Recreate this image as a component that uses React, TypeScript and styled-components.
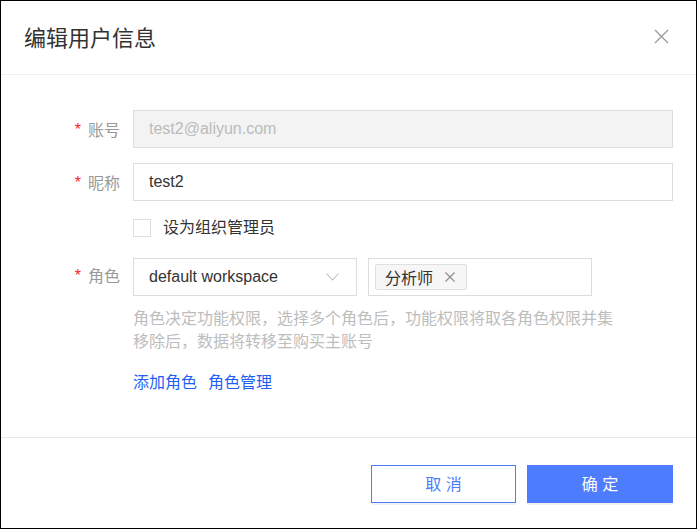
import * as React from "react";
import styled, { createGlobalStyle } from "styled-components";

const GlobalStyle = createGlobalStyle`
  html, body {
    margin: 0;
    padding: 0;
    background: #fff;
  }
  body {
    font-family: "Liberation Sans", "Noto Sans CJK SC", sans-serif;
  }
  * {
    box-sizing: border-box;
  }
`;

const Dialog = styled.div`
  width: 697px;
  height: 529px;
  border: 1px solid #000;
  background: #fff;
  display: flex;
  flex-direction: column;
`;

const Header = styled.div`
  height: 74px;
  flex-shrink: 0;
  display: flex;
  align-items: center;
  justify-content: space-between;
  padding: 0 27px 3px 23px;
  border-bottom: 1px solid #eeeeee;
`;

const Title = styled.div`
  font-size: 22px;
  color: #333;
  letter-spacing: 0;
`;

const CloseButton = styled.button`
  border: none;
  background: none;
  padding: 0;
  width: 15px;
  height: 15px;
  display: flex;
  cursor: pointer;
`;

const Body = styled.div`
  flex: 1;
  padding: 35px 23px 0 0;
  display: flex;
  flex-direction: column;
`;

const FormRow = styled.div<{ $top?: number }>`
  display: grid;
  grid-template-columns: 119px 1fr;
  column-gap: 13px;
  align-items: center;
  margin-top: ${(p) => p.$top ?? 0}px;
`;

const Label = styled.label<{ $alignTop?: boolean }>`
  display: flex;
  justify-content: flex-end;
  align-items: center;
  font-size: 16px;
  color: #999;
  white-space: nowrap;
  align-self: ${(p) => (p.$alignTop ? "start" : "auto")};
  margin-top: ${(p) => (p.$alignTop ? 5 : 0)}px;
`;

const Required = styled.span`
  color: #f5222d;
  font-size: 16px;
  margin-right: 7px;
  position: relative;
  top: 1px;
`;

const TextInput = styled.input<{ disabled?: boolean }>`
  width: 100%;
  height: 38px;
  border: 1px solid #dddddd;
  background: ${(p) => (p.disabled ? "#f3f3f3" : "#fff")};
  color: ${(p) => (p.disabled ? "#bbbbbb" : "#333")};
  font-size: 16px;
  font-family: inherit;
  padding: 0 15px;
  outline: none;
`;

const CheckLine = styled.label`
  display: flex;
  align-items: center;
  gap: 12px;
  height: 18px;
  line-height: 18px;
  font-size: 16px;
  color: #333;
`;

const CheckBox = styled.span`
  width: 18px;
  height: 18px;
  border: 1px solid #dddddd;
  background: #fff;
  display: inline-block;
`;

const RoleLine = styled.div`
  display: flex;
  gap: 11px;
`;

const Select = styled.div`
  width: 224px;
  height: 38px;
  border: 1px solid #dddddd;
  display: flex;
  align-items: center;
  justify-content: space-between;
  padding: 0 17px 0 15px;
  font-size: 16px;
  color: #333;
`;

const TagBox = styled.div`
  width: 224px;
  height: 38px;
  border: 1px solid #dddddd;
  display: flex;
  align-items: center;
  padding: 0 6px;
`;

const Tag = styled.span`
  height: 26px;
  display: inline-flex;
  align-items: center;
  gap: 12px;
  padding: 0 11px 0 9px;
  background: #f6f6f6;
  border: 1px solid #e0e0e0;
  border-radius: 2px;
  font-size: 16px;
  color: #333;
`;

const Help = styled.div`
  margin-top: 11px;
  font-size: 16px;
  line-height: 23px;
  color: #bdbdbd;
`;

const Links = styled.div`
  margin-top: 18px;
  display: flex;
  gap: 11px;
  font-size: 16px;
  line-height: 23px;
`;

const Link = styled.a`
  color: #1f5ff5;
  text-decoration: none;
  cursor: pointer;
`;

const Footer = styled.div`
  height: 91px;
  flex-shrink: 0;
  border-top: 1px solid #e8e8e8;
  display: flex;
  justify-content: flex-end;
  align-items: flex-start;
  gap: 11px;
  padding: 27px 23px 0 0;
`;

const Button = styled.button<{ $primary?: boolean }>`
  height: 38px;
  width: ${(p) => (p.$primary ? 146 : 145)}px;
  border: 1px solid #4d7cfe;
  background: ${(p) => (p.$primary ? "#4d7cfe" : "#fff")};
  color: ${(p) => (p.$primary ? "#fff" : "#4d7cfe")};
  font-size: 16px;
  font-family: inherit;
  padding: 0 0 3px;
  box-shadow: 0 2px 0 #f2f2f2;
  cursor: pointer;
  white-space: pre;
`;

const CloseIcon = () => (
  <svg width="15" height="15" viewBox="0 0 15 15">
    <path d="M1 1 L14 14 M14 1 L1 14" stroke="#9a9a9a" strokeWidth="1.3" fill="none" />
  </svg>
);

const Chevron = () => (
  <svg width="13" height="8" viewBox="0 0 13 8">
    <polyline points="0.5,0.5 6.5,7 12.5,0.5" stroke="#bdbdbd" strokeWidth="1.1" fill="none" />
  </svg>
);

const TagClose = () => (
  <svg width="10" height="10" viewBox="0 0 10 10">
    <path d="M0.5 0.5 L9.5 9.5 M9.5 0.5 L0.5 9.5" stroke="#8c8c8c" strokeWidth="1.1" fill="none" />
  </svg>
);

const App: React.FC = () => {
  return (
    <>
      <GlobalStyle />
      <Dialog>
        <Header>
          <Title>编辑用户信息</Title>
          <CloseButton>
            <CloseIcon />
          </CloseButton>
        </Header>
        <Body>
          <FormRow>
            <Label>
              <Required>*</Required>账号
            </Label>
            <TextInput disabled value="test2@aliyun.com" readOnly />
          </FormRow>
          <FormRow $top={15}>
            <Label>
              <Required>*</Required>昵称
            </Label>
            <TextInput value="test2" readOnly />
          </FormRow>
          <FormRow $top={18}>
            <span />
            <CheckLine>
              <CheckBox />
              设为组织管理员
            </CheckLine>
          </FormRow>
          <FormRow $top={21}>
            <Label $alignTop>
              <Required>*</Required>角色
            </Label>
            <RoleLine>
              <Select>
                default workspace
                <Chevron />
              </Select>
              <TagBox>
                <Tag>
                  分析师
                  <TagClose />
                </Tag>
              </TagBox>
            </RoleLine>
          </FormRow>
          <FormRow>
            <span />
            <Help>
              角色决定功能权限，选择多个角色后，功能权限将取各角色权限并集
              <br />
              移除后，数据将转移至购买主账号
            </Help>
          </FormRow>
          <FormRow>
            <span />
            <Links>
              <Link>添加角色</Link>
              <Link>角色管理</Link>
            </Links>
          </FormRow>
        </Body>
        <Footer>
          <Button>取 消</Button>
          <Button $primary>确 定</Button>
        </Footer>
      </Dialog>
    </>
  );
};

export default App;
